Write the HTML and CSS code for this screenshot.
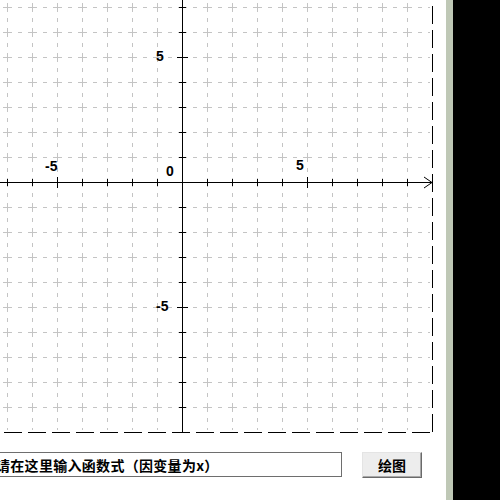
FILE: index.html
```html
<!DOCTYPE html>
<html>
<head>
<meta charset="utf-8">
<link rel="stylesheet" href="styles.css">
</head>
<body>
<div class="page">
  <div class="main">
    <svg class="plot" width="446" height="433" viewBox="0 0 446 433" shape-rendering="crispEdges">
      <g class="grid">
        <line x1="7.5" y1="0" x2="7.5" y2="430"/>
        <line x1="32.5" y1="0" x2="32.5" y2="430"/>
        <line x1="57.5" y1="0" x2="57.5" y2="430"/>
        <line x1="82.5" y1="0" x2="82.5" y2="430"/>
        <line x1="107.5" y1="0" x2="107.5" y2="430"/>
        <line x1="132.5" y1="0" x2="132.5" y2="430"/>
        <line x1="157.5" y1="0" x2="157.5" y2="430"/>
        <line x1="207.5" y1="0" x2="207.5" y2="430"/>
        <line x1="232.5" y1="0" x2="232.5" y2="430"/>
        <line x1="257.5" y1="0" x2="257.5" y2="430"/>
        <line x1="282.5" y1="0" x2="282.5" y2="430"/>
        <line x1="307.5" y1="0" x2="307.5" y2="430"/>
        <line x1="332.5" y1="0" x2="332.5" y2="430"/>
        <line x1="357.5" y1="0" x2="357.5" y2="430"/>
        <line x1="382.5" y1="0" x2="382.5" y2="430"/>
        <line x1="407.5" y1="0" x2="407.5" y2="430"/>
        <line y1="7.5" x1="0" y2="7.5" x2="430"/>
        <line y1="32.5" x1="0" y2="32.5" x2="430"/>
        <line y1="57.5" x1="0" y2="57.5" x2="430"/>
        <line y1="82.5" x1="0" y2="82.5" x2="430"/>
        <line y1="107.5" x1="0" y2="107.5" x2="430"/>
        <line y1="132.5" x1="0" y2="132.5" x2="430"/>
        <line y1="157.5" x1="0" y2="157.5" x2="430"/>
        <line y1="207.5" x1="0" y2="207.5" x2="430"/>
        <line y1="232.5" x1="0" y2="232.5" x2="430"/>
        <line y1="257.5" x1="0" y2="257.5" x2="430"/>
        <line y1="282.5" x1="0" y2="282.5" x2="430"/>
        <line y1="307.5" x1="0" y2="307.5" x2="430"/>
        <line y1="332.5" x1="0" y2="332.5" x2="430"/>
        <line y1="357.5" x1="0" y2="357.5" x2="430"/>
        <line y1="382.5" x1="0" y2="382.5" x2="430"/>
        <line y1="407.5" x1="0" y2="407.5" x2="430"/>
      </g>
      <g class="frame">
        <line class="frame-v" x1="432.5" y1="0" x2="432.5" y2="433"/>
        <line class="frame-h" x1="0" y1="432.5" x2="433" y2="432.5"/>
      </g>
      <g class="axis">
        <line x1="0" y1="182.5" x2="432" y2="182.5"/>
        <line x1="182.5" y1="0" x2="182.5" y2="432"/>
        <polyline class="arrow" points="424,177 432,182.5 424,188" shape-rendering="auto"/>
        <line x1="7.5" y1="179" x2="7.5" y2="186"/>
        <line x1="32.5" y1="179" x2="32.5" y2="186"/>
        <line x1="57.5" y1="177" x2="57.5" y2="188"/>
        <line x1="82.5" y1="179" x2="82.5" y2="186"/>
        <line x1="107.5" y1="179" x2="107.5" y2="186"/>
        <line x1="132.5" y1="179" x2="132.5" y2="186"/>
        <line x1="157.5" y1="179" x2="157.5" y2="186"/>
        <line x1="207.5" y1="179" x2="207.5" y2="186"/>
        <line x1="232.5" y1="179" x2="232.5" y2="186"/>
        <line x1="257.5" y1="179" x2="257.5" y2="186"/>
        <line x1="282.5" y1="179" x2="282.5" y2="186"/>
        <line x1="307.5" y1="177" x2="307.5" y2="188"/>
        <line x1="332.5" y1="179" x2="332.5" y2="186"/>
        <line x1="357.5" y1="179" x2="357.5" y2="186"/>
        <line x1="382.5" y1="179" x2="382.5" y2="186"/>
        <line x1="407.5" y1="179" x2="407.5" y2="186"/>
        <line y1="7.5" x1="179" y2="7.5" x2="186"/>
        <line y1="32.5" x1="179" y2="32.5" x2="186"/>
        <line y1="57.5" x1="177" y2="57.5" x2="188"/>
        <line y1="82.5" x1="179" y2="82.5" x2="186"/>
        <line y1="107.5" x1="179" y2="107.5" x2="186"/>
        <line y1="132.5" x1="179" y2="132.5" x2="186"/>
        <line y1="157.5" x1="179" y2="157.5" x2="186"/>
        <line y1="207.5" x1="179" y2="207.5" x2="186"/>
        <line y1="232.5" x1="179" y2="232.5" x2="186"/>
        <line y1="257.5" x1="179" y2="257.5" x2="186"/>
        <line y1="282.5" x1="179" y2="282.5" x2="186"/>
        <line y1="307.5" x1="177" y2="307.5" x2="188"/>
        <line y1="332.5" x1="179" y2="332.5" x2="186"/>
        <line y1="357.5" x1="179" y2="357.5" x2="186"/>
        <line y1="382.5" x1="179" y2="382.5" x2="186"/>
        <line y1="407.5" x1="179" y2="407.5" x2="186"/>
      </g>
      <g class="labels">
        <text x="156" y="60.5">5</text>
        <text x="45" y="170.5">-5</text>
        <text x="166" y="175.5">0</text>
        <text x="296" y="169.5">5</text>
        <text x="156" y="310.5">-5</text>
      </g>
    </svg>
    <div class="controls">
      <input class="expr" type="text" value="请在这里输入函数式（因变量为x）">
      <button class="draw">绘图</button>
    </div>
  </div>
  <div class="strip"></div>
  <div class="dark"></div>
</div>
</body>
</html>
```
FILE: styles.css
```css
html, body {
  margin: 0;
  padding: 0;
  background: #ffffff;
  overflow: hidden;
}
.page {
  display: flex;
  width: 500px;
  height: 500px;
}
.main {
  width: 446px;
  display: flex;
  flex-direction: column;
  overflow: hidden;
  background: #ffffff;
}
.plot {
  display: block;
  flex: none;
}
.grid line {
  stroke: #c4c4c4;
  stroke-width: 1;
  stroke-dasharray: 9 6 4 6;
  stroke-dashoffset: 22;
}
.frame line {
  stroke: #000;
  stroke-width: 1;
  stroke-dasharray: 18 6;
}
.frame-v { stroke-dashoffset: 18; }
.frame-h { stroke-dashoffset: 20; }
.axis line, .axis polyline {
  stroke: #000;
  stroke-width: 1;
  fill: none;
}
.labels text {
  font-family: "Liberation Sans", Arial, sans-serif;
  font-weight: bold;
  font-size: 14px;
  fill: #000;
}
.controls {
  display: flex;
  align-items: flex-start;
  margin-top: 19px;
  margin-left: -9px;
}
.expr {
  box-sizing: border-box;
  width: 351px;
  height: 25px;
  margin: 0;
  padding: 0 0 0 4px;
  border: 1px solid #6e6e6e;
  background: #fff;
  font-family: "Noto Sans CJK SC", "Noto Sans", sans-serif;
  font-weight: bold;
  font-size: 14px;
  letter-spacing: 0.3px;
  color: #000;
  outline: none;
}
.draw {
  box-sizing: border-box;
  width: 60px;
  height: 26px;
  margin: 0 0 0 20px;
  padding: 0;
  border: 1px solid;
  border-color: #e4e4e4 #6a6a6a #6a6a6a #e4e4e4;
  box-shadow: inset -1px -1px 0 #a8a8a8;
  background: #ededed;
  font-family: "Noto Sans CJK SC", sans-serif;
  font-weight: bold;
  font-size: 14px;
  color: #000;
}
.strip {
  width: 7px;
  background: #bfc8b6;
}
.dark {
  flex: 1;
  background: #000;
}
```
